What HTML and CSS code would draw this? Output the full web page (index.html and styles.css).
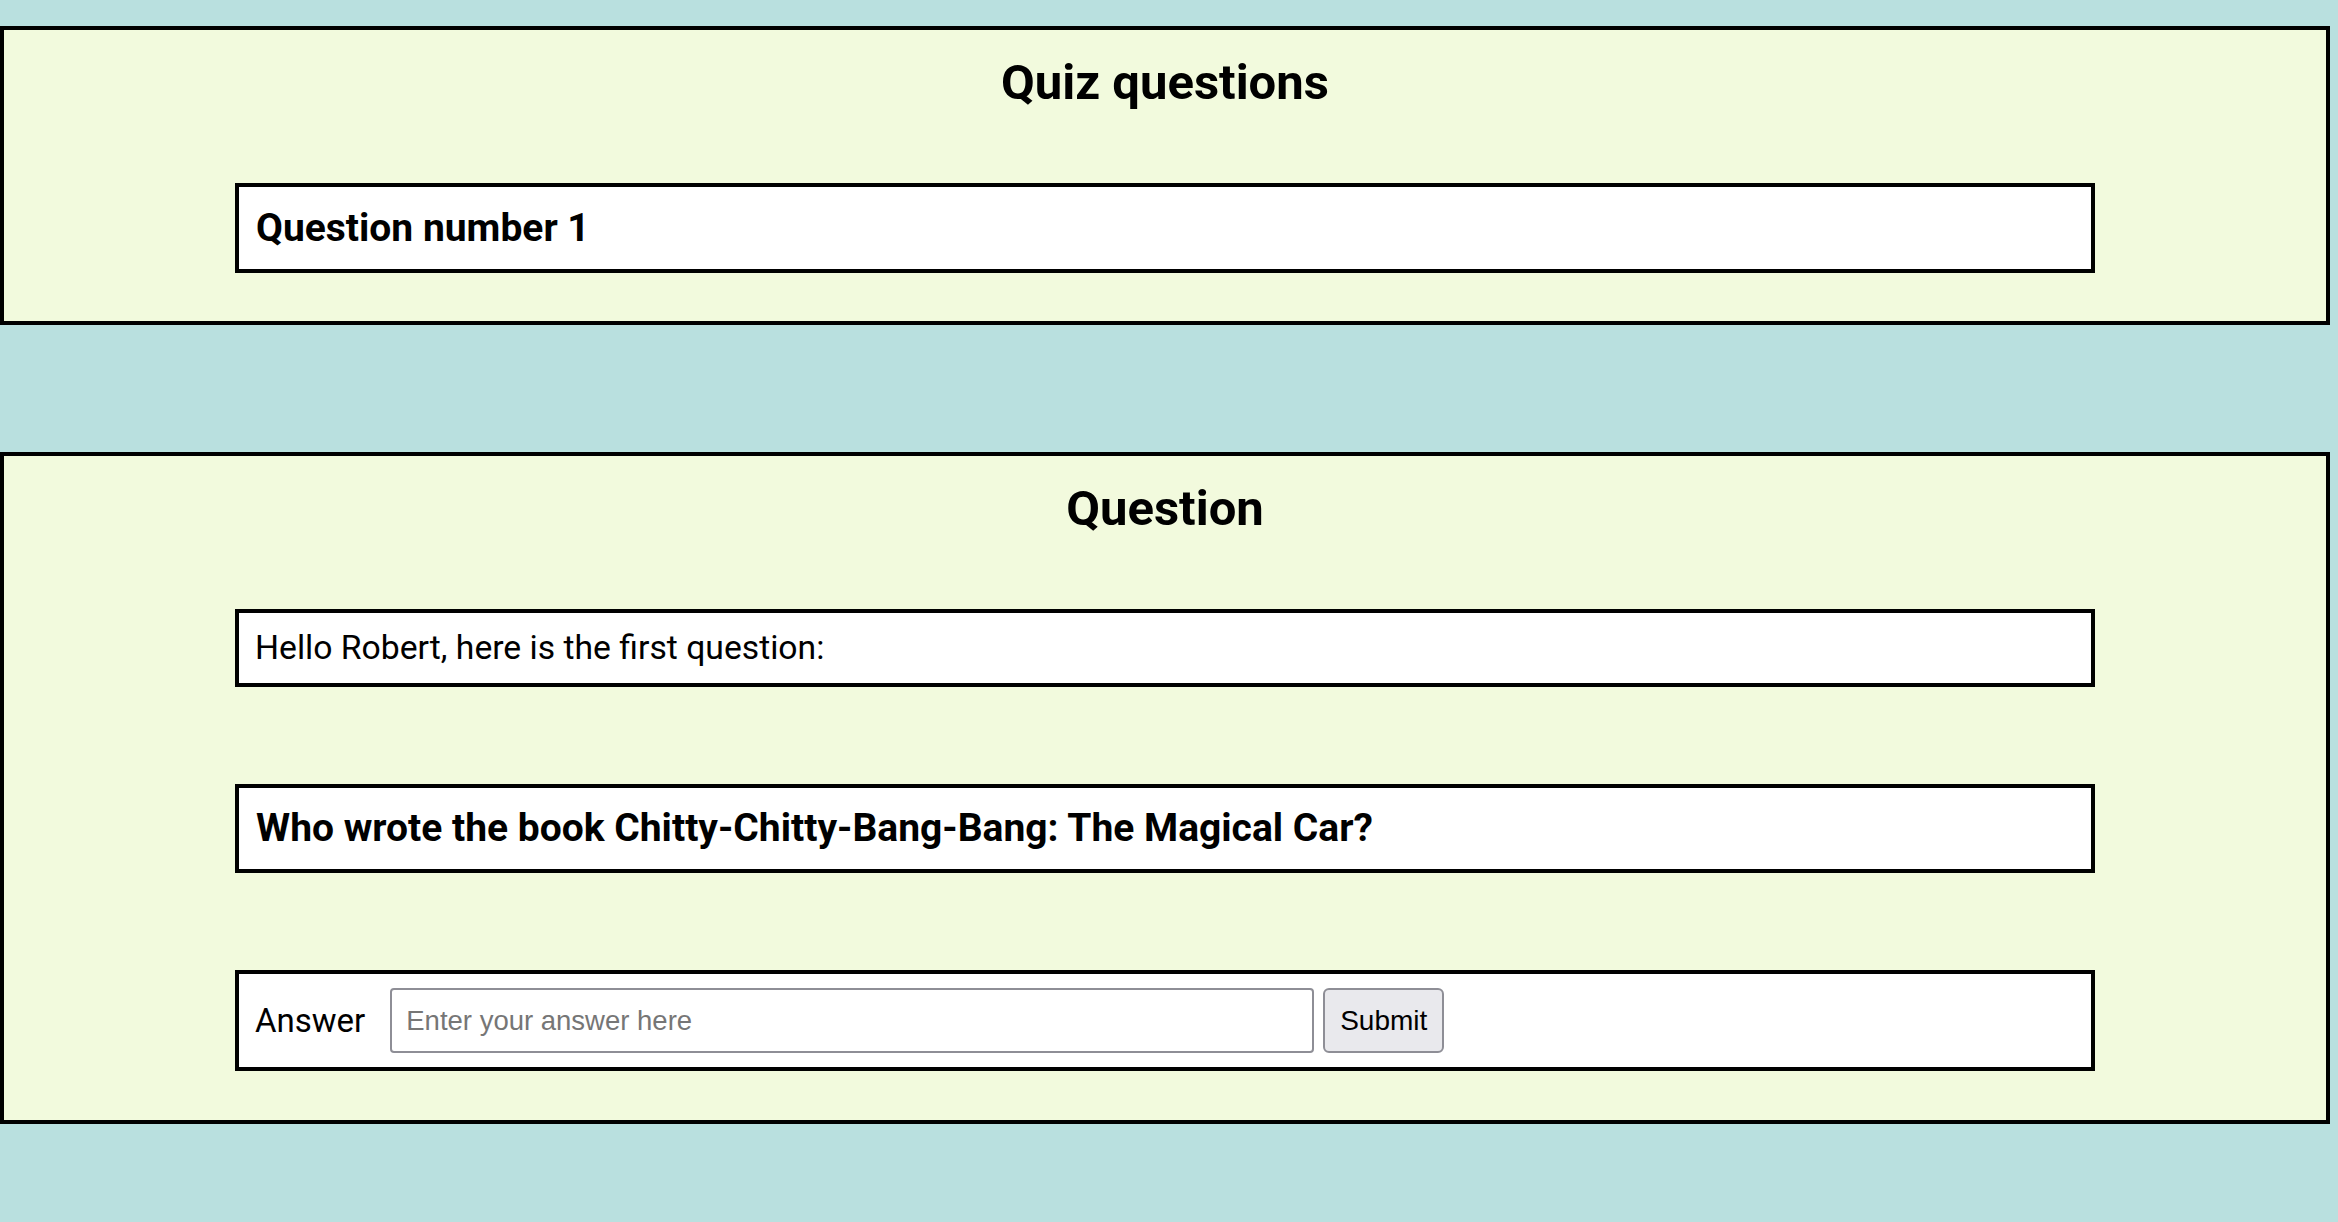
FILE: index.html
```html
<!DOCTYPE html>
<html lang="en">
<head>
<meta charset="utf-8">
<title>Quiz questions</title>
<link rel="stylesheet" href="styles.css">
</head>
<body>
  <section class="panel">
    <h1 class="panel-title">Quiz questions</h1>
    <div class="box box-heading">Question number 1</div>
  </section>

  <section class="panel">
    <h1 class="panel-title">Question</h1>
    <div class="box box-greeting">Hello Robert, here is the first question:</div>
    <div class="box box-heading box-question">Who wrote the book Chitty-Chitty-Bang-Bang: The Magical Car?</div>
    <form class="box box-answer" onsubmit="return false;">
      <label class="answer-label" for="answer">Answer</label>
      <input class="answer-input" id="answer" type="text" placeholder="Enter your answer here">
      <button class="answer-submit" type="submit">Submit</button>
    </form>
  </section>
</body>
</html>
```

FILE: styles.css
```css
html, body {
  margin: 0;
  padding: 0;
}

body {
  background: #b9e0df;
  padding-top: 26px;
  font-family: Roboto, "Liberation Sans", Arial, sans-serif;
  color: #000;
}

.panel {
  box-sizing: border-box;
  width: calc(100% - 8px);
  border: 4px solid #000;
  background: #f2fadd;
  padding: 24px 0 48px;
  display: flex;
  flex-direction: column;
  align-items: center;
}

.panel + .panel {
  margin-top: 127px;
  padding-bottom: 49px;
}

.panel-title {
  margin: 0 0 71px;
  font-size: 49px;
  line-height: 58px;
  font-weight: 700;
  text-align: center;
}

.box {
  box-sizing: border-box;
  width: 1860px;
  border: 4px solid #000;
  background: #fff;
  padding: 0 16px;
}

.box + .box {
  margin-top: 97px;
}

.box-heading {
  font-size: 39px;
  font-weight: 700;
  line-height: 82px;
  height: 90px;
  padding-left: 17px;
}

.box-question {
  line-height: 81px;
  height: 89px;
}

.box-greeting {
  font-size: 33.7px;
  font-weight: 400;
  line-height: 70px;
  height: 78px;
}

.box-answer {
  display: flex;
  align-items: center;
  padding: 14px 16px;
  height: 101px;
}

.answer-label {
  font-size: 33px;
  line-height: 39px;
  margin-right: 25px;
}

.answer-input {
  box-sizing: border-box;
  width: 924px;
  height: 65px;
  border: 2px solid #8e8e96;
  border-radius: 4px;
  padding: 0 14px;
  font-family: "Liberation Sans", Arial, sans-serif;
  font-size: 27.5px;
  color: #000;
  background: #fff;
  outline: none;
}

.answer-input::placeholder {
  color: #767676;
}

.answer-submit {
  box-sizing: border-box;
  margin-left: 9px;
  width: 121px;
  height: 65px;
  border: 2px solid #8e8e96;
  border-radius: 6px;
  background: #e9e9ed;
  font-family: "Liberation Sans", Arial, sans-serif;
  font-size: 28px;
  color: #000;
  padding: 0;
}
```
